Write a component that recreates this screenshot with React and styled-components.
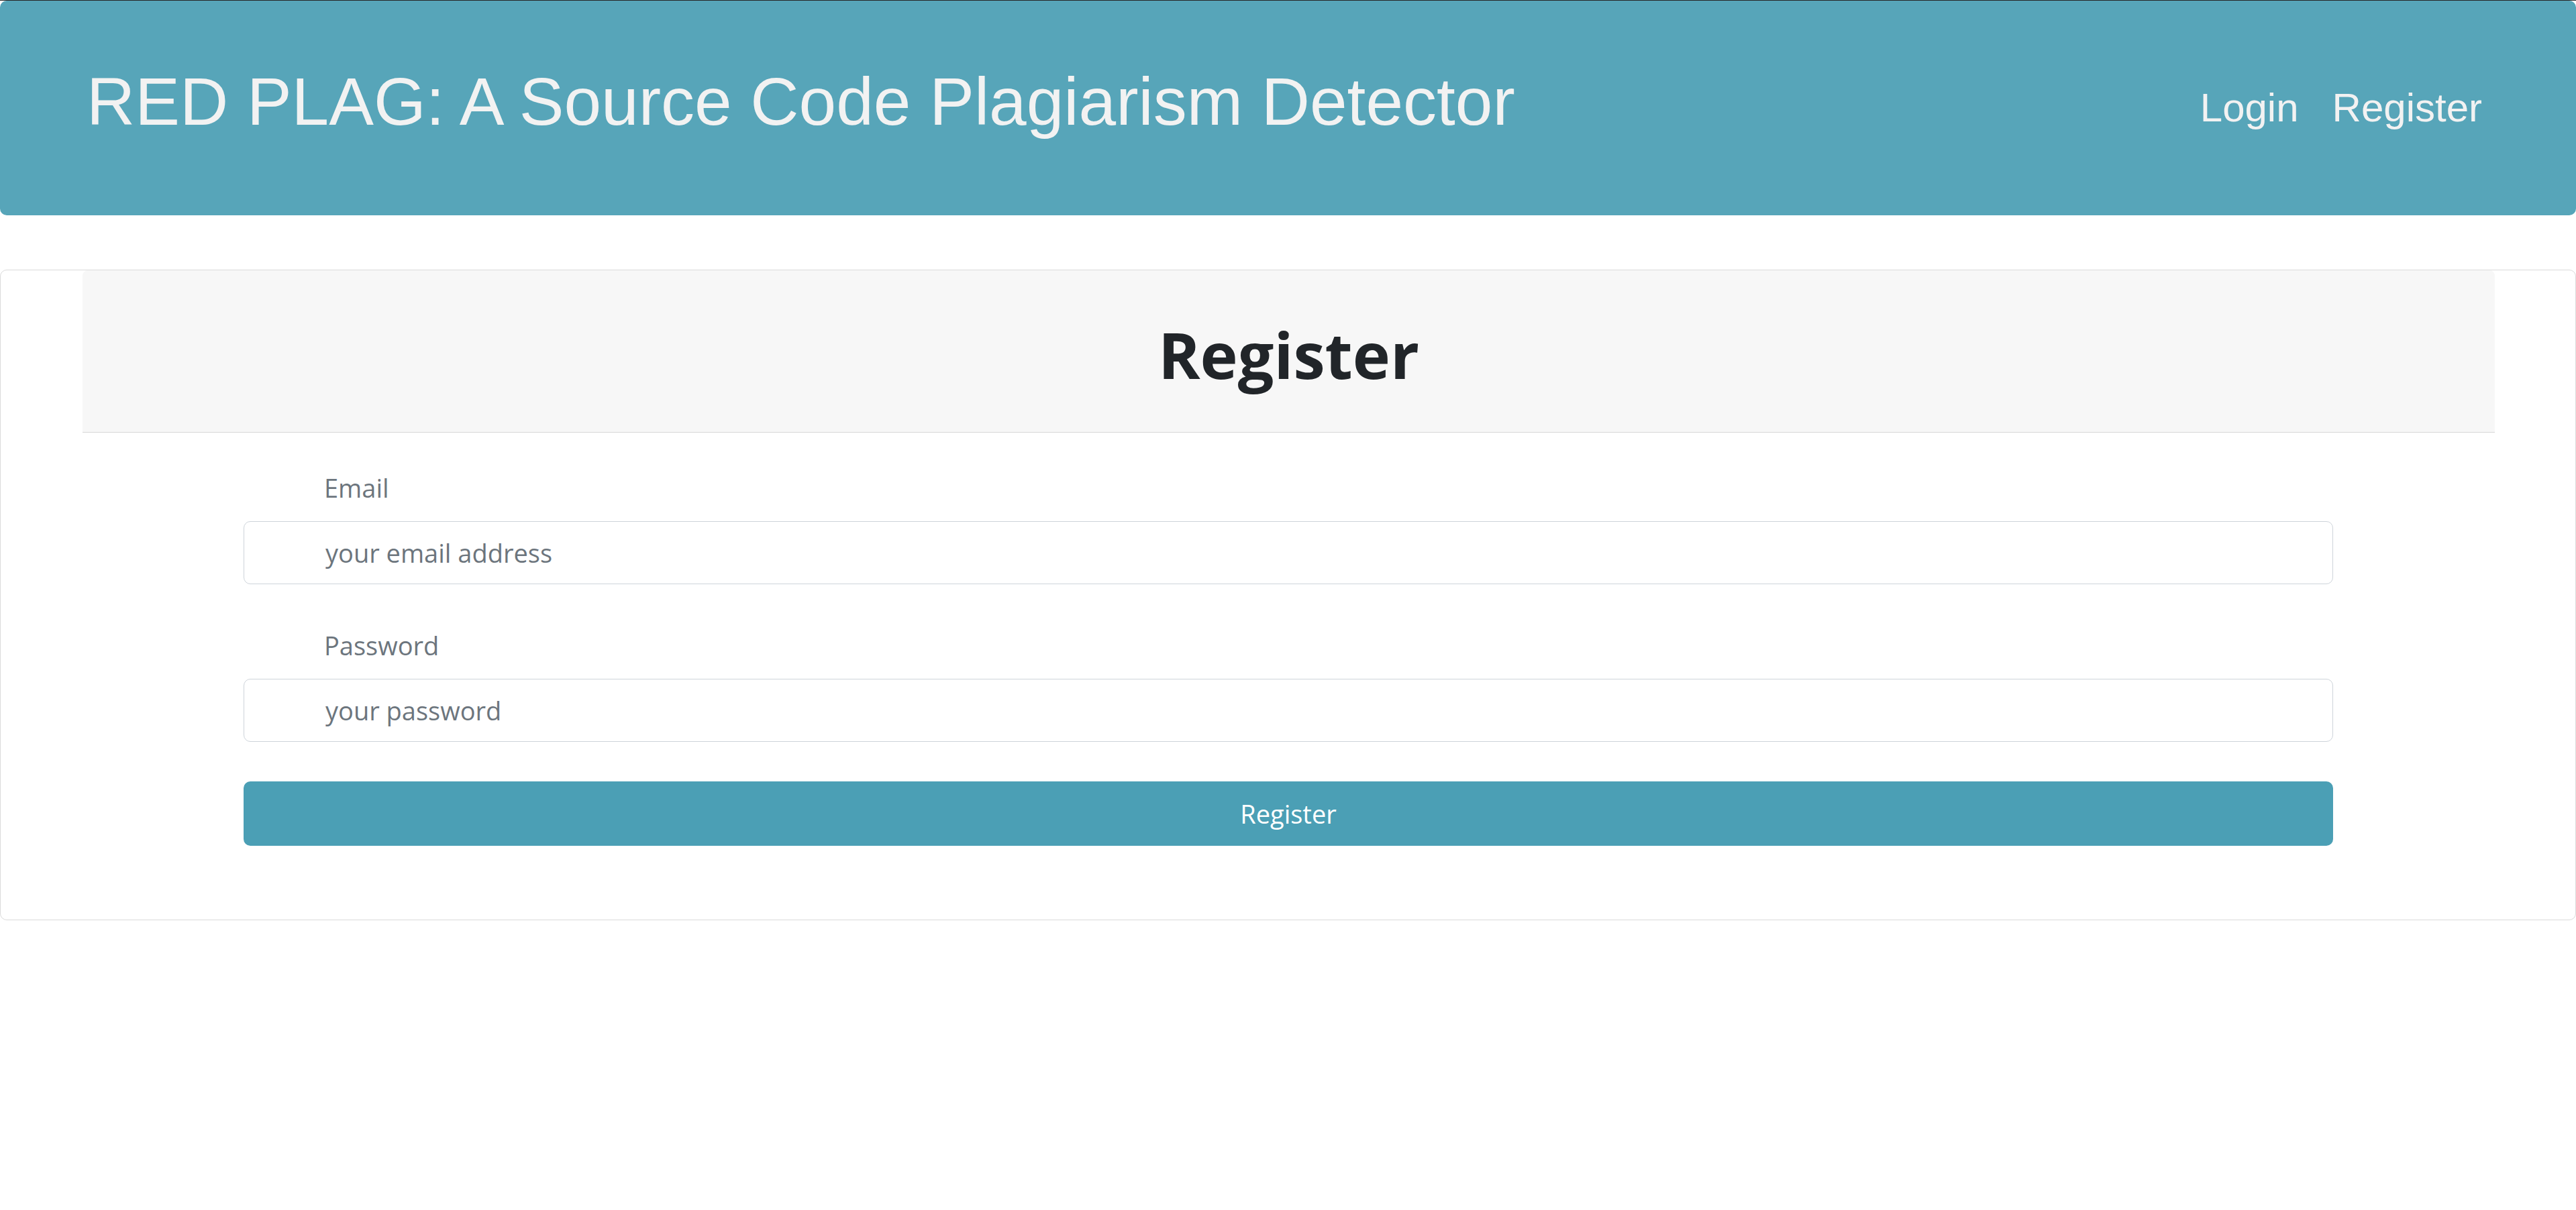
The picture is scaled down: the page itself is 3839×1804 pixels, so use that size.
import React from 'react';
import styled, { createGlobalStyle } from 'styled-components';

const GlobalStyle = createGlobalStyle`
  body {
    margin: 0;
    background: #ffffff;
    font-family: "Open Sans", "Noto Sans", sans-serif;
    color: #212529;
  }
  * {
    box-sizing: border-box;
  }
`;

const TopEdge = styled.div`
  height: 1px;
  background: #262626;
`;

const Header = styled.header`
  display: flex;
  align-items: center;
  justify-content: space-between;
  height: 320px;
  padding: 0 140px 0 129px;
  background: #57a5b9;
  border-radius: 10px;
`;

const Title = styled.h1`
  margin: 0 0 20px;
  font-family: "Liberation Sans", Arial, sans-serif;
  font-size: 100px;
  font-weight: 400;
  line-height: 1.2;
  color: #f2f2f2;
`;

const Nav = styled.nav`
  display: flex;
  gap: 50px;
`;

const NavLink = styled.a`
  font-family: "Liberation Sans", Arial, sans-serif;
  font-size: 60px;
  line-height: 1.5;
  color: #f2f2f2;
  text-decoration: none;
  cursor: pointer;
`;

const Card = styled.section`
  margin-top: 81px;
  padding: 0 120px 110px 122px;
  border: 1px solid #dadada;
  border-radius: 10px;
`;

const CardHeader = styled.div`
  display: flex;
  align-items: center;
  justify-content: center;
  height: 242px;
  padding-top: 8px;
  background: #f7f7f7;
  border-bottom: 1px solid #d6d6d6;
  border-radius: 8px 8px 0 0;
`;

const Heading = styled.h2`
  margin: 0;
  font-size: 95px;
  font-weight: 700;
  line-height: 1.2;
  color: #212529;
`;

const Form = styled.form`
  display: flex;
  flex-direction: column;
  padding: 54px 241px 0 240px;
`;

const Field = styled.div`
  display: flex;
  flex-direction: column;
  margin-bottom: ${(p) => p.$gap || '0px'};
`;

const Label = styled.label`
  padding-left: 120px;
  margin-bottom: 21px;
  font-size: 38px;
  line-height: 1.5;
  color: #6c757d;
`;

const Input = styled.input`
  height: 94px;
  padding: 0 20px 0 121px;
  border: 1px solid #ced4da;
  border-radius: 10px;
  font-family: inherit;
  font-size: 38px;
  color: #495057;
  outline: none;

  &::placeholder {
    color: #6c757d;
  }
`;

const SubmitButton = styled.button`
  height: 96px;
  border: none;
  border-radius: 10px;
  background: #4b9fb5;
  color: #ffffff;
  font-family: inherit;
  font-size: 38px;
  cursor: pointer;
`;

export default function App() {
  return (
    <>
      <GlobalStyle />
      <TopEdge />
      <Header>
        <Title>RED PLAG: A Source Code Plagiarism Detector</Title>
        <Nav>
          <NavLink>Login</NavLink>
          <NavLink>Register</NavLink>
        </Nav>
      </Header>
      <Card>
        <CardHeader>
          <Heading>Register</Heading>
        </CardHeader>
        <Form onSubmit={(e) => e.preventDefault()}>
          <Field $gap="63px">
            <Label htmlFor="email">Email</Label>
            <Input id="email" type="email" placeholder="your email address" />
          </Field>
          <Field $gap="59px">
            <Label htmlFor="password">Password</Label>
            <Input id="password" type="password" placeholder="your password" />
          </Field>
          <SubmitButton type="submit">Register</SubmitButton>
        </Form>
      </Card>
    </>
  );
}
